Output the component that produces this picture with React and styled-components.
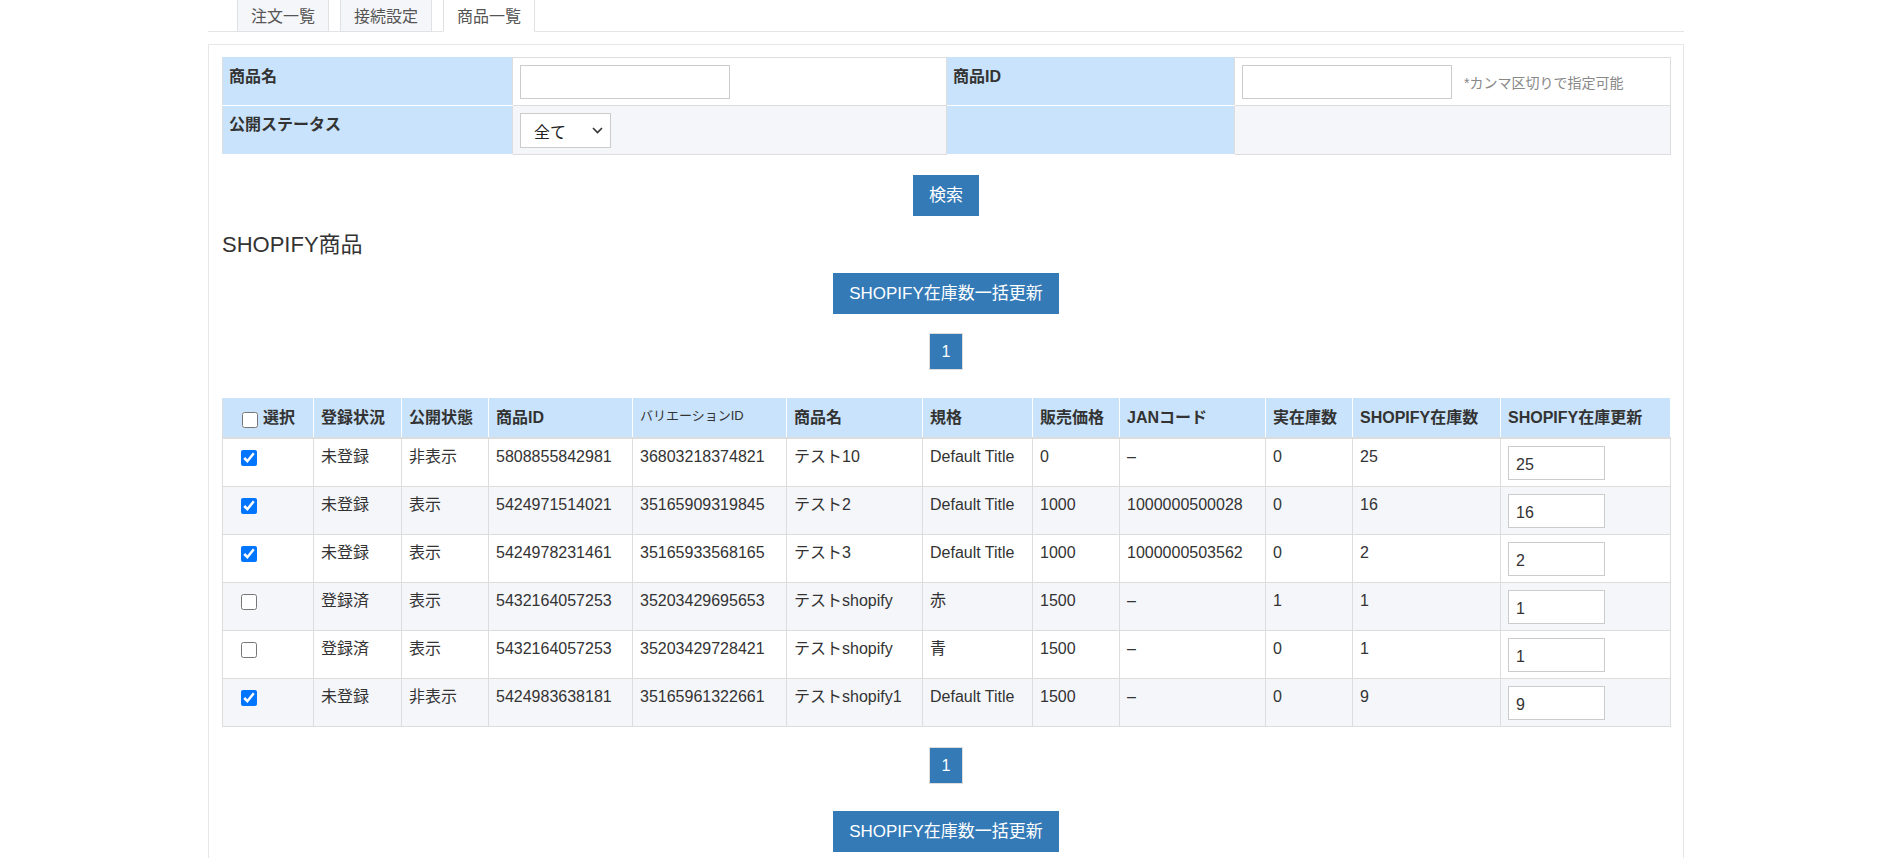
import styled, { createGlobalStyle } from "styled-components";

const GlobalStyle = createGlobalStyle`
  html, body {
    margin: 0;
    padding: 0;
    background: #fff;
  }
  body {
    font-family: "Liberation Sans", Arial, "Noto Sans CJK JP", sans-serif;
    font-size: 16px;
    color: #333;
  }
  * {
    box-sizing: border-box;
  }
`;

const searchCols = [290, 434, 288, 436];
const dataCols = [91, 88, 87, 144, 154, 136, 110, 87, 146, 87, 148, 170];

const rows = [
  [true, "未登録", "非表示", "5808855842981", "36803218374821", "テスト10", "Default Title", "0", "–", "0", "25"],
  [true, "未登録", "表示", "5424971514021", "35165909319845", "テスト2", "Default Title", "1000", "1000000500028", "0", "16"],
  [true, "未登録", "表示", "5424978231461", "35165933568165", "テスト3", "Default Title", "1000", "1000000503562", "0", "2"],
  [false, "登録済", "表示", "5432164057253", "35203429695653", "テストshopify", "赤", "1500", "–", "1", "1"],
  [false, "登録済", "表示", "5432164057253", "35203429728421", "テストshopify", "青", "1500", "–", "0", "1"],
  [true, "未登録", "非表示", "5424983638181", "35165961322661", "テストshopify1", "Default Title", "1500", "–", "0", "9"],
];

function App() {
  return (
    <>
      <GlobalStyle />
      <Page>
        <TabBar>
          <Tab>注文一覧</Tab>
          <Tab>接続設定</Tab>
          <Tab $active>商品一覧</Tab>
        </TabBar>

        <Panel>
          <SearchTable>
            <colgroup>
              {searchCols.map((w, i) => (
                <Col key={i} $w={w} />
              ))}
            </colgroup>
            <tbody>
              <tr>
                <Label>商品名</Label>
                <Value>
                  <TextInput type="text" />
                </Value>
                <Label>商品ID</Label>
                <Value>
                  <TextInput type="text" />
                  <Note>*カンマ区切りで指定可能</Note>
                </Value>
              </tr>
              <tr>
                <Label>公開ステータス</Label>
                <Value $striped>
                  <SelectBox>
                    <span>全て</span>
                    <svg width="11" height="7" viewBox="0 0 11 7">
                      <path d="M1 1l4.5 4.5L10 1" fill="none" stroke="#333" strokeWidth="1.6" />
                    </svg>
                  </SelectBox>
                </Value>
                <Label />
                <Value $striped />
              </tr>
            </tbody>
          </SearchTable>

          <Center $mt={20}>
            <Button>検索</Button>
          </Center>

          <Title>SHOPIFY商品</Title>

          <Center>
            <Button>SHOPIFY在庫数一括更新</Button>
          </Center>

          <Center $mt={19}>
            <PageNum>1</PageNum>
          </Center>

          <DataTable>
            <colgroup>
              {dataCols.map((w, i) => (
                <Col key={i} $w={w} />
              ))}
            </colgroup>
            <thead>
              <tr>
                <CheckHead>
                  <CheckLabel>
                    <Check type="checkbox" readOnly />
                    <span>選択</span>
                  </CheckLabel>
                </CheckHead>
                <Th>登録状況</Th>
                <Th>公開状態</Th>
                <Th>商品ID</Th>
                <Th $small>バリエーションID</Th>
                <Th>商品名</Th>
                <Th>規格</Th>
                <Th>販売価格</Th>
                <Th>JANコード</Th>
                <Th>実在庫数</Th>
                <Th>SHOPIFY在庫数</Th>
                <Th>SHOPIFY在庫更新</Th>
              </tr>
            </thead>
            <tbody>
              {rows.map((r, i) => (
                <Row key={i} $striped={i % 2 === 1}>
                  <CheckCell>
                    <Check type="checkbox" checked={r[0]} readOnly />
                  </CheckCell>
                  {r.slice(1, 10).map((v, j) => (
                    <Td key={j}>{v}</Td>
                  ))}
                  <Td>{r[10]}</Td>
                  <Td>
                    <StockInput type="text" defaultValue={r[10]} />
                  </Td>
                </Row>
              ))}
            </tbody>
          </DataTable>

          <Center $mt={20}>
            <PageNum>1</PageNum>
          </Center>

          <Center $mt={27}>
            <Button>SHOPIFY在庫数一括更新</Button>
          </Center>
        </Panel>
      </Page>
    </>
  );
}

const Page = styled.div`
  width: 1476px;
  margin-left: 208px;
`;

const TabBar = styled.div`
  display: flex;
  gap: 11px;
  height: 32px;
  padding-left: 29px;
  border-bottom: 1px solid #e3e4e8;
`;

const Tab = styled.div`
  width: 92px;
  height: 32px;
  display: flex;
  align-items: center;
  justify-content: center;
  padding-bottom: 2px;
  font-size: 16px;
  color: #555;
  background: ${(p) => (p.$active ? "#fff" : "#f5f6fa")};
  border: 1px solid #e0e1e5;
  border-top: none;
  border-bottom-color: ${(p) => (p.$active ? "#fff" : "#e0e1e5")};
`;

const Panel = styled.div`
  margin-top: 12px;
  border: 1px solid #e6e7eb;
  border-bottom: none;
  padding: 12px 13px 40px;
`;

const Col = styled.col`
  width: ${(p) => p.$w}px;
`;

const SearchTable = styled.table`
  width: 100%;
  table-layout: fixed;
  border-collapse: collapse;
`;

const Label = styled.th`
  background: #c9e3fc;
  text-align: left;
  vertical-align: top;
  font-weight: bold;
  font-size: 16px;
  line-height: 22px;
  padding: 8px 6px;
  border: 1px solid #ddd;
  border-bottom-color: #fff;
  border-top-color: #c9e3fc;
`;

const Value = styled.td`
  background: ${(p) => (p.$striped ? "#f5f6fa" : "#fff")};
  vertical-align: middle;
  padding: 7px 7px 6px;
  border: 1px solid #ddd;
  height: 48px;
`;

const TextInput = styled.input`
  width: 210px;
  height: 34px;
  border: 1px solid #ccc;
  padding: 6px 8px;
  font-size: 16px;
  font-family: inherit;
  vertical-align: middle;
`;

const Note = styled.span`
  margin-left: 12px;
  font-size: 14px;
  color: #888;
  vertical-align: middle;
`;

const SelectBox = styled.div`
  width: 91px;
  height: 35px;
  display: flex;
  align-items: center;
  justify-content: space-between;
  padding: 0 7px 0 13px;
  background: #fff;
  border: 1px solid #ccc;
  font-size: 16px;
  color: #222;
`;

const Center = styled.div`
  text-align: center;
  margin-top: ${(p) => p.$mt || 0}px;
`;

const Button = styled.button`
  font-family: inherit;
  font-size: 17px;
  line-height: 23px;
  color: #fff;
  background: #337ab7;
  border: 1px solid #337ab7;
  border-radius: 0;
  padding: 8px 15px;
  cursor: pointer;
`;

const Title = styled.h3`
  margin: 17px 0 16px;
  font-size: 22px;
  line-height: 24px;
  font-weight: normal;
  color: #333;
`;

const PageNum = styled.span`
  display: inline-block;
  padding: 6px 12px;
  font-size: 16px;
  line-height: 23px;
  color: #fff;
  background: #337ab7;
  border: 1px solid #ddd;
`;

const DataTable = styled.table`
  width: 100%;
  margin-top: 28px;
  table-layout: fixed;
  border-collapse: collapse;
`;

const Th = styled.th`
  height: 39px;
  background: #c9e3fc;
  text-align: left;
  vertical-align: top;
  font-weight: ${(p) => (p.$small ? "normal" : "bold")};
  font-size: ${(p) => (p.$small ? "13px" : "16px")};
  line-height: ${(p) => (p.$small ? "16px" : "20px")};
  padding: 9px 7px 7px;
  border: 1px solid #fff;
  border-top-color: #c9e3fc;
  border-bottom: 2px solid #ddd;
  white-space: nowrap;
  overflow: hidden;
`;

const CheckHead = styled(Th)`
  padding-left: 19px;
  border-left-color: #ddd;
`;

const CheckLabel = styled.label`
  display: flex;
  align-items: center;
  gap: 5px;
  height: 20px;
`;

const Row = styled.tr`
  background: ${(p) => (p.$striped ? "#f5f6fa" : "#fff")};
`;

const Td = styled.td`
  vertical-align: top;
  font-size: 16px;
  line-height: 22px;
  padding: 7px 7px 6px;
  border: 1px solid #ddd;
  white-space: nowrap;
`;

const CheckCell = styled(Td)`
  padding-left: 18px;
`;

const Check = styled.input`
  width: 16px;
  height: 16px;
  margin: 4px 0 0;
  vertical-align: top;
  flex: none;
`;

const StockInput = styled.input`
  width: 97px;
  height: 34px;
  border: 1px solid #ccc;
  padding: 4px 7px 0;
  font-size: 16px;
  font-family: inherit;
  color: #333;
`;

export default App;
